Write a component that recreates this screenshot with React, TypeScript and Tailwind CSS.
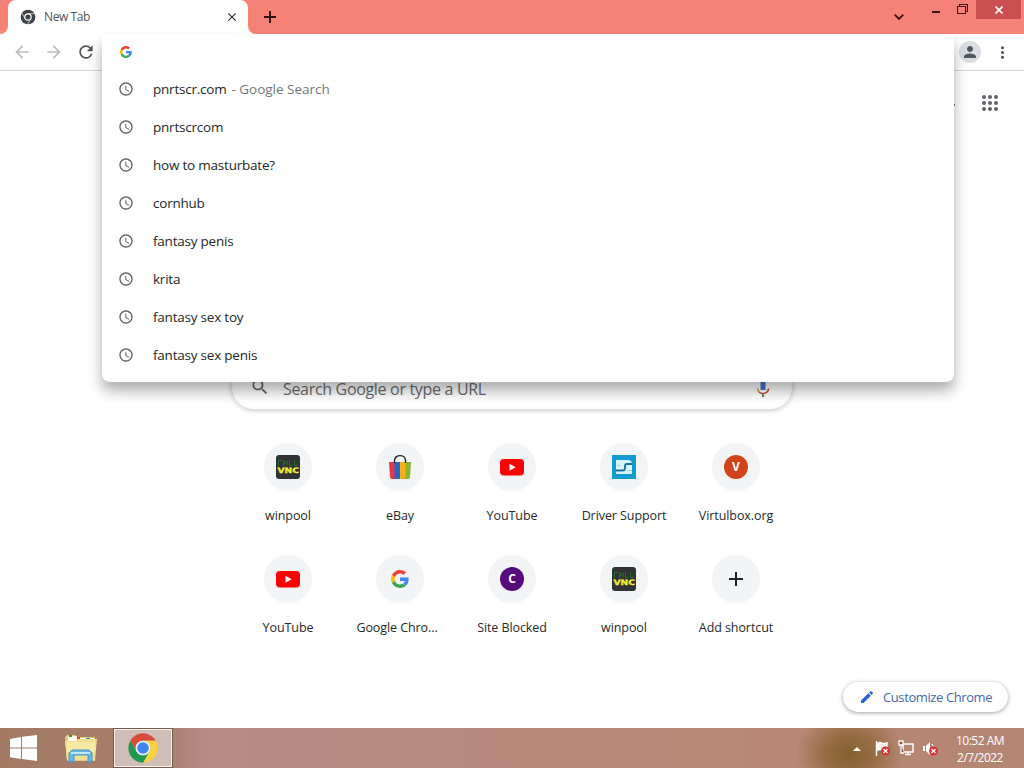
import React from "react";
import {
  MdAccessTime,
  MdArrowBack,
  MdArrowForward,
  MdClose,
  MdEdit,
  MdMoreVert,
  MdPerson,
  MdRefresh,
  MdSearch,
} from "react-icons/md";

const suggestions = [
  { text: "pnrtscr.com", hint: "Google Search" },
  { text: "pnrtscrcom" },
  { text: "how to masturbate?" },
  { text: "cornhub" },
  { text: "fantasy penis" },
  { text: "krita" },
  { text: "fantasy sex toy" },
  { text: "fantasy sex penis" },
];

function GoogleIcon({ className }: { className?: string }) {
  return (
    <svg viewBox="0 0 48 48" className={className}>
      <path fill="#ea4335" d="M24 9.5c3.5 0 6.7 1.2 9.2 3.6l6.9-6.9C35.9 2.4 30.5 0 24 0 14.6 0 6.5 5.4 2.6 13.2l8 6.2C12.4 13.7 17.7 9.5 24 9.5z" />
      <path fill="#4285f4" d="M47 24.5c0-1.6-.2-3.1-.4-4.5H24v9h13c-.6 3-2.3 5.5-4.800 7.200l7.700 6C44.400 38 47 32 47 24.500z" />
      <path fill="#fbbc05" d="M10.5 28.6c-.5-1.500-.8-3-.8-4.600s.3-3.100.8-4.600l-8-6.200C.9 16.500 0 20.100 0 24s.9 7.500 2.600 10.800z" />
      <path fill="#34a853" d="M24 48c6.5 0 11.900-2.100 15.900-5.800l-7.700-6c-2.200 1.500-4.900 2.300-8.200 2.300-6.300 0-11.600-4.200-13.500-9.900l-8 6.200C6.500 42.600 14.600 48 24 48z" />
    </svg>
  );
}

function ChromeIcon({ className }: { className?: string }) {
  return (
    <svg viewBox="0 0 48 48" className={className}>
      <path fill="#d94a3d" d="M24 13H43.05A22 22 0 0 0 4.95 13L14.47 29.5A11 11 0 0 1 24 13z" />
      <path fill="#fdd13c" d="M43.05 13A22 22 0 0 1 24 46L33.53 29.5A11 11 0 0 0 24 13z" />
      <path fill="#1d9a50" d="M24 46A22 22 0 0 1 4.95 13L14.47 29.5A11 11 0 0 0 33.53 29.5z" />
      <circle cx="24" cy="24" r="11" fill="#f1f4fa" />
      <circle cx="24" cy="24" r="8.7" fill="#3f86ee" />
    </svg>
  );
}

function ChromeMonoIcon({ className }: { className?: string }) {
  return (
    <svg viewBox="0 0 48 48" className={className}>
      <circle cx="24" cy="24" r="22" fill="#3e4246" />
      <path d="M24 14H45M32.7 29L22 47M15.3 29L5 11" stroke="#fff" strokeWidth="2" />
      <circle cx="24" cy="24" r="9.5" fill="#3e4246" stroke="#fff" strokeWidth="3.5" />
    </svg>
  );
}

function VncIcon() {
  return (
    <svg viewBox="0 0 24 24" className="size-6">
      <rect width="24" height="24" rx="3" fill="#303233" />
      <path d="M2 5.500h4M2.500 5.500v5.500M7.500 5v6M7.500 8h3.500M11 5v6M13.500 5.500v5h3M18.500 5.500v5h3" stroke="#1c7429" fill="none" />
      <text
        x="1.5"
        y="18"
        textLength="21.5"
        lengthAdjust="spacingAndGlyphs"
        fontSize="7.5"
        fontWeight="700"
        fontFamily="DejaVu Sans"
        fill="#f2ee32"
        stroke="#f2ee32"
        strokeWidth="0.3"
      >
        VNC
      </text>
    </svg>
  );
}

function EbayIcon() {
  return (
    <svg viewBox="0 0 24 26" className="h-[26px] w-6">
      <path d="M1 8h6v17H4a2 2 0 0 1-2-2z" fill="#e5394b" />
      <path d="M6.5 8H12v17H6.500z" fill="#2765c5" />
      <path d="M12 8h6v17h-6z" fill="#f7b116" />
      <path d="M17.500 8H23l-1 15a2 2 0 0 1-2 2h-2.500z" fill="#8ab52c" />
      <path d="M6.500 9V6.500c0-6.500 11-6.500 11 0V9" stroke="#222" strokeWidth="1.4" fill="none" />
    </svg>
  );
}

function YoutubeIcon() {
  return (
    <svg viewBox="0 0 24 24" className="size-6">
      <rect y="4" width="24" height="16.5" rx="4" fill="#fe0000" />
      <path d="M9.5 8.7v7l6.200-3.500z" fill="#fff" />
    </svg>
  );
}

function DriverIcon() {
  return (
    <svg viewBox="0 0 24 24" className="size-6">
      <path d="M0 0h24v24H0z" fill="#129bd2" />
      <path d="M4 5h12q4 0 4 4v10H4z" fill="#d8f4fb" />
      <path d="M20 9h-5q-2 0-2 2v2q0 2.500-2.500 2.500H4" stroke="#176f9c" strokeWidth="1.8" fill="none" />
      <path d="M5 10.500h3M15.500 15.500H20" stroke="#8fd3ec" />
    </svg>
  );
}

function AddIcon() {
  return (
    <svg viewBox="0 0 14 14" className="size-3.5">
      <path d="M7 0v14M0 7h14" stroke="#202124" strokeWidth="2" />
    </svg>
  );
}

function AppsIcon() {
  const dots = [2, 8, 14];
  return (
    <svg viewBox="0 0 16 16" className="size-4" fill="#5f6368">
      {dots.map((y) => dots.map((x) => <circle key={`${x}-${y}`} cx={x} cy={y} r="2" />))}
    </svg>
  );
}

function LetterIcon({ letter, color }: { letter: string; color: string }) {
  return (
    <div className={`flex size-6 items-center justify-center rounded-full text-[12px] font-bold text-white ${color}`}>
      {letter}
    </div>
  );
}

const shortcuts = [
  { name: "winpool", icon: <VncIcon /> },
  { name: "eBay", icon: <EbayIcon /> },
  { name: "YouTube", icon: <YoutubeIcon /> },
  { name: "Driver Support", icon: <DriverIcon /> },
  { name: "Virtulbox.org", icon: <LetterIcon letter="V" color="bg-[#d1431b]" /> },
  { name: "YouTube", icon: <YoutubeIcon /> },
  { name: "Google Chro...", icon: <GoogleIcon className="size-[18px]" />, labelClass: "mr-1.5" },
  { name: "Site Blocked", icon: <LetterIcon letter="C" color="bg-[#560b7c]" /> },
  { name: "winpool", icon: <VncIcon /> },
  { name: "Add shortcut", icon: <AddIcon /> },
];

function TabStrip() {
  return (
    <div className="flex h-[34px] bg-[#f58177]">
      <svg viewBox="0 0 8 8" className="size-2 self-end">
        <path d="M8 0v8H0a8 8 0 0 0 8-8z" fill="#fff" />
      </svg>
      <div className="flex w-60 items-center rounded-t-lg bg-white pr-[9px] pl-3">
        <ChromeMonoIcon className="size-4" />
        <span className="ml-2 flex-1 text-[12px] tracking-[-0.4px] text-[#505357]">New Tab</span>
        <MdClose className="size-3.5 text-[#303134]" stroke="currentColor" />
      </div>
      <svg viewBox="0 0 8 8" className="size-2 self-end">
        <path d="M0 0v8h8a8 8 0 0 1-8-8z" fill="#fff" />
      </svg>
      <svg viewBox="0 0 12 12" className="mt-[11px] ml-2 size-3">
        <path d="M6 0v12M0 6h12" stroke="#2b1010" strokeWidth="2" />
      </svg>
      <div className="ml-auto flex items-start">
        <svg viewBox="0 0 10 6" className="mt-3.5 mr-7 h-1.5 w-2.5">
          <path d="M.7.7L5 5 9.300.7" fill="none" stroke="#3a1010" strokeWidth="1.9" />
        </svg>
        <div className="mt-[11px] mr-[17px] h-0.5 w-2 bg-[#3a1614]" />
        <svg viewBox="0 0 11 10" className="mt-1 mr-2 h-2.5 w-[11px]">
          <path d="M2.500 2.500V.5h8v7h-2M.5 2.500h8v7h-8z" fill="none" stroke="#3a1614" strokeWidth="1.1" />
        </svg>
        <div className="mr-[3px] flex h-[19px] w-[45px] items-center justify-center bg-[#cb4f51]">
          <svg viewBox="0 0 8 8" className="size-2">
            <path d="M.5.5l7 7M7.500.5l-7 7" stroke="#fff" strokeWidth="1.6" />
          </svg>
        </div>
      </div>
    </div>
  );
}

function Toolbar() {
  return (
    <div className="flex h-[37px] items-center border-b border-[#d5d6d8] bg-white pl-3 text-[#505357]">
      <MdArrowBack className="size-5 text-[#babcbe]" />
      <MdArrowForward className="ml-3 size-5 text-[#babcbe]" />
      <MdRefresh className="ml-3 size-5" />
      <div className="ml-auto flex size-[22px] items-center justify-center rounded-full bg-[#dadde2]">
        <MdPerson className="size-[18px] text-[#4d5661]" />
      </div>
      <MdMoreVert className="mr-3 ml-3 size-[19px]" />
    </div>
  );
}

function Omnibox() {
  return (
    <div className="absolute top-[35px] left-[102px] h-[347px] w-[852px] rounded-b-lg bg-white shadow-[0_9px_14px_rgba(0,0,0,0.32)]">
      <div className="flex h-[35px] items-center pb-0.5 pl-[18px]">
        <GoogleIcon className="size-3" />
      </div>
      {suggestions.map((item) => (
        <div key={item.text} className="flex h-[38px] items-center pl-4 text-[13.5px] text-[#25272a]">
          <MdAccessTime className="size-4 text-[#5f6368]" />
          <span className="ml-[19px] tracking-[-0.22px]">{item.text}</span>
          {item.hint && <span className="ml-[5px] tracking-[-0.02px] text-[#73767a]">- {item.hint}</span>}
        </div>
      ))}
    </div>
  );
}

function NewTabPage() {
  return (
    <div className="flex h-[657px] flex-col bg-white">
      <div className="flex h-[293px] justify-end pt-6 pr-[26px]">
        <div className="mt-[9px] mr-[27px] h-0.5 w-0.5 bg-[#777]" />
        <AppsIcon />
      </div>
      <div className="mx-auto flex h-[46px] w-[562px] items-center rounded-full border border-[#dfe1e5] pr-[22px] pl-[18px] shadow-[0_1px_4px_rgba(32,33,36,0.24)]">
        <MdSearch className="size-5" color="#5d6063" />
        <span className="ml-[13px] pt-[3px] text-[16px] tracking-[-0.32px] text-[#696c70]">Search Google or type a URL</span>
        <svg viewBox="0 0 14 22" className="mt-0.5 ml-auto h-[22px] w-3.5">
          <path d="M4.500 2h5v11h-5z" fill="#4475cf" />
          <path d="M1.500 11.500c0 2 1 3 2 4" stroke="#d7a125" strokeWidth="1.6" fill="none" />
          <path d="M3 15c2 2 6 2 8 0 1-1 1.500-2 1.500-3.500" stroke="#c84b40" strokeWidth="1.6" fill="none" />
          <path d="M7 16v4" stroke="#79804c" strokeWidth="2" />
        </svg>
      </div>
      <div className="mx-auto mt-[17px] grid w-[560px] grid-cols-5">
        {shortcuts.map((item, i) => (
          <div key={i} className="flex h-28 flex-col items-center pt-4">
            <div className="flex size-12 items-center justify-center rounded-full bg-[#f3f4f6]">{item.icon}</div>
            <span
              className={`mt-[17px] text-[12.5px] leading-4 tracking-[-0.08px] whitespace-nowrap text-[#27292c] ${item.labelClass ?? ""}`}
            >
              {item.name}
            </span>
          </div>
        ))}
      </div>
      <div className="mt-auto mr-4 mb-4 flex h-[30px] w-[165px] items-center self-end rounded-full bg-white pl-4 text-[13px] text-[#4267b5] shadow-[0_1px_4px_rgba(0,0,0,0.38)]">
        <MdEdit className="size-4 text-[#2d65d2]" />
        <span className="ml-2 pt-0.5 tracking-[-0.4px] whitespace-nowrap">Customize Chrome</span>
      </div>
    </div>
  );
}

function FolderIcon() {
  return (
    <svg viewBox="0 0 34 30" className="h-[30px] w-[34px]">
      <path d="M1 4l2-2h8l2 2h18v24H3z" fill="#e3cb7d" />
      <path d="M4 3h9v5H4zM14 5h9v4h-9zM22 5h8v4h-8z" fill="#fff9e8" />
      <path d="M5 2h3v2H5z" fill="#508b3d" />
      <path d="M13 4h3v2h-3z" fill="#cc4b36" />
      <path d="M22 5h4v2h-4z" fill="#3c8cbb" />
      <path d="M1 8h11l2-2h19l-2 21H3z" fill="#f3df8c" />
      <path d="M2 9h29v10H3z" fill="#f8eaa5" />
      <path d="M5 29v-9l3-3h17l3 3v9h-4v-7H10v7z" fill="#65b8e8" stroke="#4695c9" />
      <path d="M7 20h19" stroke="#bfe7fa" strokeWidth="2" />
    </svg>
  );
}

function ErrorBadge() {
  return (
    <g>
      <circle cx="11.5" cy="11" r="4.5" fill="#d73333" />
      <path d="M9.500 9l4 4M13.500 9l-4 4" stroke="#fff" strokeWidth="1.3" />
    </g>
  );
}

function Taskbar() {
  return (
    <div className="flex h-10 items-center bg-[radial-gradient(ellipse_54px_44px_at_850px_26px,#85602f_0%,rgba(139,100,52,0.75)_45%,transparent_100%),linear-gradient(90deg,#a37b65_0%,#a77e6b_16%,#b68c84_20%,#b7897b_55%,#b88776_78%,#b38573_100%)] text-white">
      <svg viewBox="0 0 27 26" className="ml-2.5 h-[26px] w-[27px]">
        <path d="M0 4l11-2v10.500H0zM12 1.800L27 0v12.500H12zM0 13.500h11V24L0 22.300zM12 13.500h15V26l-15-1.900z" fill="#fff" />
      </svg>
      <div className="ml-[27px]">
        <FolderIcon />
      </div>
      <div className="ml-[15px] flex h-10 w-[60px] items-center justify-center border border-[#735c50] bg-[#d0beb6] shadow-[inset_0_0_0_1px_#fff4ec]">
        <ChromeIcon className="size-8" />
      </div>
      <div className="ml-auto flex items-center">
        <svg viewBox="0 0 8 4" className="mt-0.5 h-1 w-2">
          <path d="M0 4l4-4 4 4z" fill="#fff" />
        </svg>
        <svg viewBox="0 0 16 16" className="ml-[13px] size-4">
          <path d="M2.500 1v15M4 3c3-2 4 2 9 0v7c-5 2-6-2-9 0z" stroke="#fff" strokeWidth="1.4" fill="#f6eae4" />
          <ErrorBadge />
        </svg>
        <svg viewBox="0 0 16 16" className="ml-2 size-4">
          <path d="M5 4h10v8H5zM7 14.500h6M10 12v2" stroke="#fff" strokeWidth="1.4" fill="none" />
          <path d="M1 1h4v4H1zM3 5v8h3" stroke="#fff" strokeWidth="1.3" fill="#765647" />
        </svg>
        <svg viewBox="0 0 16 16" className="ml-2 size-4">
          <path d="M1 6h2v5H1zM4 6l4-4v13l-4-4z" fill="#fff" />
          <path d="M10 4q2 2 1 5" stroke="#fff" fill="none" />
          <ErrorBadge />
        </svg>
      </div>
      <div className="mr-3.5 ml-3 flex w-[60px] flex-col items-center pt-0.5 text-[12px] leading-[17px] tracking-[-0.5px] whitespace-nowrap">
        <span>10:52 AM</span>
        <span>2/7/2022</span>
      </div>
    </div>
  );
}

export default function App() {
  return (
    <div className="relative h-[768px] w-[1024px] overflow-hidden bg-white font-['Open_Sans','Noto_Sans',sans-serif]">
      <TabStrip />
      <Toolbar />
      <NewTabPage />
      <Taskbar />
      <Omnibox />
    </div>
  );
}
